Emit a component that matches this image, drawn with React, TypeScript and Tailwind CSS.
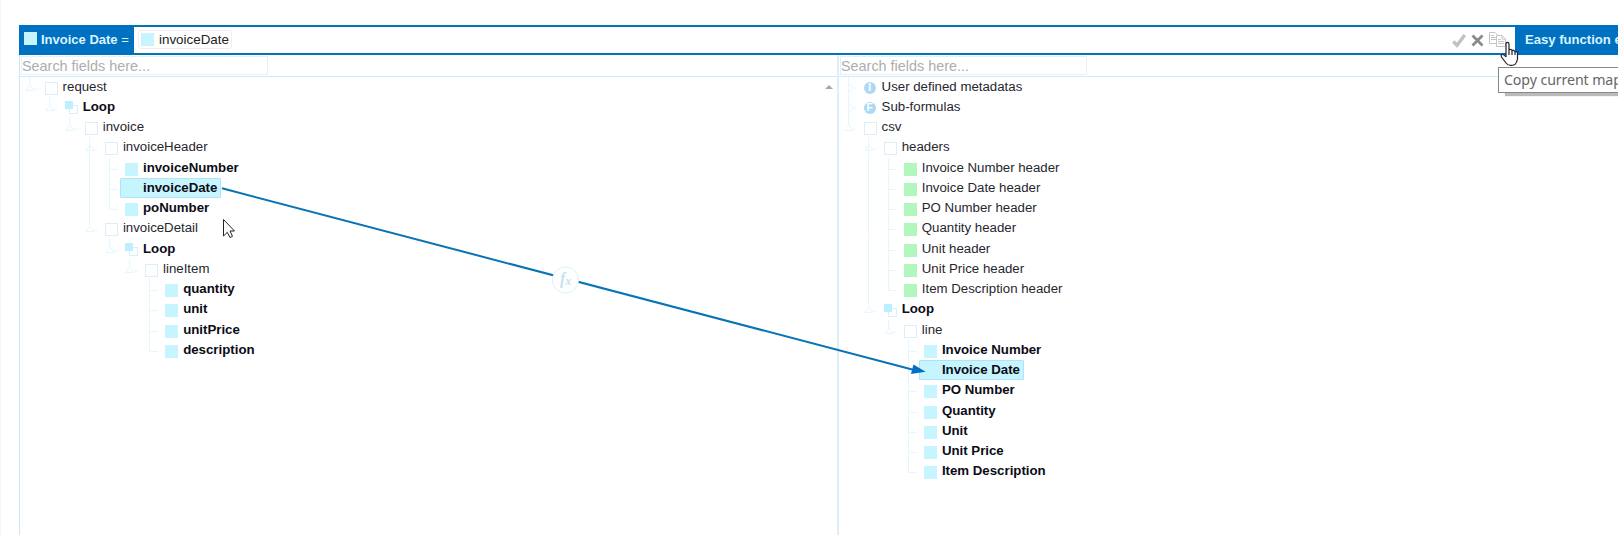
import React from "react";

type Kind = "node" | "loop" | "field" | "header" | "info" | "formula";
type Row = {
  label: string;
  kind: Kind;
  depth: number;
  toggle?: "open" | "closed";
  rails?: number[];
  last?: boolean;
  selected?: boolean;
};

const source: Row[] = [
  { label: "request", kind: "node", depth: 0, toggle: "open", last: true },
  { label: "Loop", kind: "loop", depth: 1, toggle: "open", last: true },
  { label: "invoice", kind: "node", depth: 2, toggle: "open", last: true },
  { label: "invoiceHeader", kind: "node", depth: 3, toggle: "open" },
  { label: "invoiceNumber", kind: "field", depth: 4, rails: [3] },
  { label: "invoiceDate", kind: "field", depth: 4, rails: [3], selected: true },
  { label: "poNumber", kind: "field", depth: 4, rails: [3], last: true },
  { label: "invoiceDetail", kind: "node", depth: 3, toggle: "open", last: true },
  { label: "Loop", kind: "loop", depth: 4, toggle: "open", last: true },
  { label: "lineItem", kind: "node", depth: 5, toggle: "open", last: true },
  { label: "quantity", kind: "field", depth: 6 },
  { label: "unit", kind: "field", depth: 6 },
  { label: "unitPrice", kind: "field", depth: 6 },
  { label: "description", kind: "field", depth: 6, last: true },
];

const target: Row[] = [
  { label: "User defined metadatas", kind: "info", depth: 0, toggle: "closed" },
  { label: "Sub-formulas", kind: "formula", depth: 0, toggle: "closed" },
  { label: "csv", kind: "node", depth: 0, toggle: "open", last: true },
  { label: "headers", kind: "node", depth: 1, toggle: "open" },
  { label: "Invoice Number header", kind: "header", depth: 2, rails: [1] },
  { label: "Invoice Date header", kind: "header", depth: 2, rails: [1] },
  { label: "PO Number header", kind: "header", depth: 2, rails: [1] },
  { label: "Quantity header", kind: "header", depth: 2, rails: [1] },
  { label: "Unit header", kind: "header", depth: 2, rails: [1] },
  { label: "Unit Price header", kind: "header", depth: 2, rails: [1] },
  { label: "Item Description header", kind: "header", depth: 2, rails: [1], last: true },
  { label: "Loop", kind: "loop", depth: 1, toggle: "open", last: true },
  { label: "line", kind: "node", depth: 2, toggle: "open", last: true },
  { label: "Invoice Number", kind: "field", depth: 3 },
  { label: "Invoice Date", kind: "field", depth: 3, selected: true },
  { label: "PO Number", kind: "field", depth: 3 },
  { label: "Quantity", kind: "field", depth: 3 },
  { label: "Unit", kind: "field", depth: 3 },
  { label: "Unit Price", kind: "field", depth: 3 },
  { label: "Item Description", kind: "field", depth: 3, last: true },
];

function Guide({ row, level }: { row: Row; level: number }) {
  const own = level === row.depth;
  const rail = !own && row.rails?.includes(level);
  return (
    <svg className="h-[20.25px] w-[20.1px] shrink-0" viewBox="0 0 20.1 20.25" fill="none" stroke="#e6f6fe" strokeWidth="1">
      {rail && <path d="M4.5 0V20.25" />}
      {own && !row.toggle && <path d={row.last ? "M4.5 0V11.500H13" : "M4.5 0V20.25M4.5 11.500H13"} />}
      {own && row.toggle === "open" && (
        <path d={row.last ? "M4.5 0V8M5 8L9 13.500H1L5 8M9 12H13" : "M4.5 0V20.25M5 8L9 13.500H1L5 8M9 12H13"} />
      )}
      {own && row.toggle === "closed" && <path d="M4.500 0V20.25M4.500 6.500V15.500L9.500 11L4.500 6.500M9.500 11H13" />}
    </svg>
  );
}

function Glyph({ row }: { row: Row }) {
  if (row.kind === "info" || row.kind === "formula")
    return (
      <span className="mt-[3px] mr-[1px] flex size-[12px] shrink-0 items-center justify-center rounded-full bg-[#add9f5] text-[10px] leading-none font-bold text-white">
        {row.kind === "info" ? "I" : "F"}
      </span>
    );
  if (row.kind === "loop")
    return (
      <svg className="mt-[2px] size-[13px] shrink-0" viewBox="0 0 13 13">
        <rect x="4.500" y="4.500" width="8" height="8" fill="#fff" stroke="#d9effa" />
        <rect width="8" height="8" fill="#bcefff" />
      </svg>
    );
  if (row.kind === "node") return <span className="mt-[3px] size-[13px] shrink-0 border border-[#dceff8] bg-white" />;
  if (row.kind === "header") return <span className="mt-[3px] size-[13px] shrink-0 bg-[#b2f7bd]" />;
  return <span className="mt-[3px] size-[13px] shrink-0 bg-[#c6f4ff]" />;
}

function TreeRow({ row }: { row: Row }) {
  const bold = row.kind === "field" || row.kind === "loop";
  return (
    <li className="flex h-[20.25px] items-center">
      {Array.from({ length: row.depth + 1 }, (_, level) => (
        <Guide key={level} row={row} level={level} />
      ))}
      <span
        className={
          row.selected
            ? "-ml-[5px] flex h-[20px] items-center gap-[5px] rounded-[1px] border border-[#aee4f6] bg-[#c6f4ff] pr-[3px] pl-[4px]"
            : "flex h-full items-center gap-[5px]"
        }
      >
        <Glyph row={row} />
        <span className={bold ? "font-bold text-[#0c0c16]" : "text-[#26262e]"}>{row.label}</span>
      </span>
    </li>
  );
}

function Panel({ rows, className, children }: { rows: Row[]; className: string; children?: React.ReactNode }) {
  return (
    <section className={className}>
      <div className="h-[21px] border-b border-[#cdeafa]">
        <input
          aria-label="Search fields"
          placeholder="Search fields here..."
          className="mt-[1px] ml-[1px] block h-[19px] w-[247px] border border-[#e4f1f8] bg-white text-[14.400px] outline-none placeholder:text-[#adadad]"
        />
      </div>
      <div className="-mt-[0.5px] flex justify-between">
        <ul className="pl-[4.500px]">
          {rows.map((row, i) => (
            <TreeRow key={i} row={row} />
          ))}
        </ul>
        {children}
      </div>
    </section>
  );
}

export default function App() {
  return (
    <main className="relative flex h-[535px] w-full flex-col overflow-hidden border-l border-[#f3f8fb] bg-white pt-[25px] pl-[18px] font-['Liberation_Sans',Arial,sans-serif] text-[13.25px] leading-[18px]">
      <header className="flex h-[30px] w-full shrink-0 border-y-2 border-[#0076b3]">
        <div className="-my-[2px] flex w-[115px] shrink-0 items-center gap-[4px] bg-[#0070c0] pl-[5px] text-[13px] font-bold whitespace-nowrap text-[#d9f4ff]">
          <span className="mb-[3px] size-[13px] bg-[#c6f4ff]" />
          <span className="mb-[1px]">
            Invoice Date <span className="font-normal">=</span>
          </span>
        </div>
        <div className="flex grow items-center pl-[4px]">
          <div className="mb-[2px] flex h-[19px] items-center gap-[4px] rounded-[3px] border border-[#f1eeee] px-[2px] text-[#222]">
            <span className="size-[13px] bg-[#c6f4ff]" />
            <span className="mt-[2px] ml-[1px] text-[13.4px]">invoiceDate</span>
          </div>
        </div>
        <div className="flex items-center gap-[5px] pr-[8px]">
          <svg className="h-[15px] w-[14px]" viewBox="0 0 14 15">
            <path d="M1.200 8.500L5 12.300L12.800 2" fill="none" stroke="#c2c2c2" strokeWidth="3.500" />
          </svg>
          <svg className="h-[13px] w-[13px]" viewBox="0 0 13 13">
            <path d="M1.500 1.500L11.500 11.500M11.500 1.500L1.500 11.500" stroke="#898989" strokeWidth="2.800" />
          </svg>
          <svg className="mb-[1px] h-[15px] w-[18px]" viewBox="0 0 18 15" fill="#fff" stroke="#c4c4c4">
            <path d="M.5.500H6L9 3.500V11.500H.5ZM2 3.500H5M2 5.500H7M2 7.500H7" />
            <path d="M7.500 3.500H13L16.500 7V14.500H7.500ZM13 3.500V7H16.500M9 7.500H12M9 9.500H15M9 11.500H15" />
          </svg>
        </div>
        <div className="-my-[2px] flex w-[103px] shrink-0 items-center overflow-hidden bg-[#0070c0] pb-[1px] pl-[10px] text-[13.100px] font-bold whitespace-nowrap text-[#d9f4ff]">
          Easy function editor
        </div>
      </header>
      <div className="flex grow">
        <Panel rows={source} className="w-[818px] shrink-0 border-l border-[#cde4f8]">
          <svg className="mt-[8px] mr-[4px] h-[4px] w-[8px]" viewBox="0 0 8 4">
            <path d="M4 0L8 4H0Z" fill="#a8a8a8" />
          </svg>
        </Panel>
        <Panel rows={target} className="grow border-l-2 border-[#dceffb]" />
      </div>

      <svg className="pointer-events-none absolute top-0 left-[-1px] h-[535px] w-[1618px]" viewBox="0 0 1618 535">
        <path d="M222 188.300L916 370.500" stroke="#0873b5" strokeWidth="2" />
        <path d="M925.500 371.800L911 374L913.500 364.500Z" fill="#0070c0" />
        <circle cx="565.500" cy="280" r="13" fill="#fff" stroke="#dcf1fa" />
        <text x="560" y="284" fontFamily="Liberation Serif" fontStyle="italic" fontWeight="bold" fontSize="16" fill="#c3e3f3">
          f<tspan fontSize="12" dy="1">x</tspan>
        </text>
        <path d="M223.500 219.500V236L227.300 232.300L230 237.500L232.500 236.300L230 231H234.500Z" fill="#fff" stroke="#25202c" />
      </svg>

      <div className="absolute top-[67px] left-[1497px] flex h-[26px] w-[180px] items-center border border-[#888] bg-white pl-[5px] font-['Noto_Sans','Open_Sans',sans-serif] text-[14.200px] tracking-[-0.1px] whitespace-nowrap text-[#666] shadow-[7px_3px_1px_#bbb]">
        Copy current mapping
      </div>
      <svg className="absolute top-[41px] left-[1499px] h-[26px] w-[20px]" viewBox="0 0 20 26">
        <path
          d="M6 16V3Q6 1.300 7.500 1.300Q9 1.300 9 3V9Q9.500 8 11 8.500Q12 9 12 10Q13 8.800 14 9.500L15 11Q16.500 10 17.500 11.500V18Q17 21 15 23.500Q9 26 6 22L1.500 16Q.5 13.500 2.500 13.500Q4 13.500 6 16M9 9V14M12 10V14M15 11V14"
          fill="#fff"
          stroke="#20222a"
          strokeWidth="1.200"
        />
      </svg>
    </main>
  );
}
